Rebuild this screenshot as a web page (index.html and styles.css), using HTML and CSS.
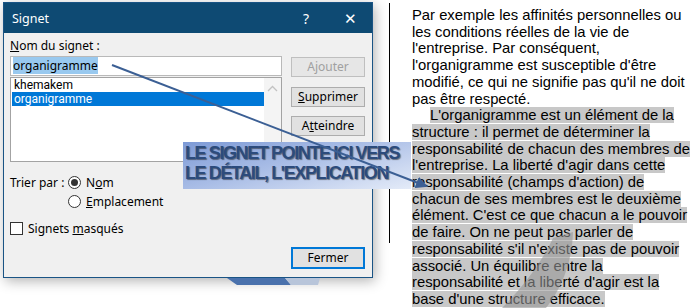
FILE: index.html
```html
<!DOCTYPE html>
<html lang="fr">
<head>
    <meta charset="UTF-8">
    <meta name="viewport" content="width=device-width, initial-scale=1.0">
    <title>Signet</title>
    <link rel="stylesheet" href="styles.css">
</head>
<body>
    <div class="page">
        <div class="dialog">
            <div class="titlebar">
                <span class="title">Signet</span>
                <span class="title-btn">?</span>
                <span class="title-btn close">&#x2715;</span>
            </div>
            <div class="dialog-body">
                <div class="left-col">
                    <div class="field-label"><u>N</u>om du signet :</div>
                    <div class="name-input"><span class="sel-text">organigramme</span></div>
                    <div class="listbox">
                        <div class="items">
                            <div class="item">khemakem</div>
                            <div class="item selected">organigramme</div>
                        </div>
                        <div class="scrollbar">
                            <svg width="11" height="7" viewBox="0 0 11 7"><path d="M1 6 L5.5 1.5 L10 6" fill="none" stroke="#c2c2c2" stroke-width="1.3"/></svg>
                        </div>
                    </div>
                    <div class="sort-row">
                        <span class="sort-label">Trier par :</span>
                        <span class="radio checked"></span>
                        <span>N<u>o</u>m</span>
                    </div>
                    <div class="sort-row second">
                        <span class="radio"></span>
                        <span><u>E</u>mplacement</span>
                    </div>
                    <div class="check-row">
                        <span class="checkbox"></span>
                        <span>Signets <u>m</u>asqués</span>
                    </div>
                </div>
                <div class="buttons">
                    <div class="btn disabled">Ajouter</div>
                    <div class="btn"><u>S</u>upprimer</div>
                    <div class="btn">A<u>t</u>teindre</div>
                    <div class="btn default">Fermer</div>
                </div>
            </div>
        </div>

        <div class="doc">
            <div class="doc-rule"></div>
            <p class="doc-text">
                Par exemple les affinités personnelles ou<br>
                les conditions réelles de la vie de<br>
                l'entreprise. Par conséquent,<br>
                l'organigramme est susceptible d'être<br>
                modifié, ce qui ne signifie pas qu'il ne doit<br>
                pas être respecté.<br>
                <span class="indent"></span><mark>L'organigramme est un élément de la<br>
                structure : il permet de déterminer la<br>
                responsabilité de chacun des membres de<br>
                l'entreprise. La liberté d'agir dans cette<br>
                responsabilité (champs d'action) de<br>
                chacun de ses membres est le deuxième<br>
                élément. C'est ce que chacun a le pouvoir<br>
                de faire. On ne peut pas parler de<br>
                responsabilité s'il n'existe pas de pouvoir<br>
                associé. Un équilibre entre la<br>
                responsabilité et la liberté d'agir est la<br>
                base d'une structure efficace.</mark>
            </p>
        </div>
    </div>

    <!-- annotation laid over the screenshot -->
    <div class="callout">LE SIGNET POINTE ICI VERS<br>LE DÉTAIL, L'EXPLICATION</div>

    <svg class="overlay" width="693" height="308" viewBox="0 0 693 308">
        <defs>
            <marker id="head" markerWidth="6" markerHeight="6" refX="5" refY="3" orient="auto" markerUnits="strokeWidth">
                <path d="M0 0 L6 3 L0 6 Z" fill="#3b5f94"/>
            </marker>
        </defs>
        <!-- curved arrow shape peeking out -->
        <path d="M227 278 L285 278 L291 285 L237 285 Z" fill="#4a72ad"/>
        <path d="M285 278 L320 278 L318 285 L291 285 Z" fill="#b8c5da"/>
        <path d="M553 238 L573 232 C572 262 562 288 546 308 L502 308 C522 288 542 262 553 238 Z" fill="rgba(150,150,150,0.6)"/>
        <!-- pointer line -->
        <line x1="112" y1="65" x2="426" y2="186" stroke="#3b5f94" stroke-width="2" marker-end="url(#head)"/>
    </svg>
</body>
</html>
```

FILE: styles.css
```css
* {
    box-sizing: border-box;
    padding: 0;
    margin: 0;
}
body {
    width: 693px;
    height: 308px;
    overflow: hidden;
    background: #fff;
    position: relative;
    font-family: 'Noto Sans', sans-serif;
}
.page {
    display: flex;
    align-items: flex-start;
}

/* dialog */
.dialog {
    width: 370px;
    height: 276px;
    margin: 2px 0 0 3px;
    border: 1px solid #1a5485;
    background: #f0f0f0;
    box-shadow: 2px 3px 12px rgba(0, 0, 0, 0.3);
    font-size: 12px;
    color: #000;
}
.titlebar {
    height: 30px;
    background: #0e4a73;
    color: #fff;
    display: flex;
    align-items: center;
}
.title {
    flex: 1;
    padding-left: 8px;
    font-size: 12.5px;
}
.title-btn {
    width: 44px;
    text-align: center;
    font-size: 14px;
}
.title-btn.close {
    font-size: 15px;
}
.dialog-body {
    height: 244px;
    display: grid;
    grid-template-columns: 272px 74px;
    column-gap: 9px;
    padding: 5px 7px 8px 6px;
}
.field-label {
    line-height: 16px;
    margin-bottom: 2px;
}
.name-input {
    height: 20px;
    background: #fff;
    border: 1px solid #b9b9b9;
    padding: 1px 0 0 2px;
    line-height: 15px;
}
.sel-text {
    background: #99c9ef;
}
.listbox {
    height: 85px;
    margin-top: 1px;
    background: #fff;
    border: 1px solid #a3a3a3;
    display: flex;
}
.items {
    flex: 1;
    padding-left: 1px;
    font-family: Roboto, sans-serif;
    font-size: 12px;
}
.item {
    height: 14px;
    line-height: 14px;
    padding-left: 2px;
}
.item.selected {
    background: #0078d7;
    color: #fff;
}
.scrollbar {
    width: 17px;
    background: #f4f4f4;
    display: flex;
    justify-content: center;
    padding-top: 7px;
}
.scrollbar svg {
    display: block;
}
.sort-row {
    height: 18px;
    display: flex;
    align-items: center;
    margin-top: 11px;
}
.sort-row.second {
    margin-top: 1px;
    padding-left: 58px;
}
.sort-label {
    width: 58px;
}
.radio {
    width: 13px;
    height: 13px;
    border: 1px solid #333;
    border-radius: 50%;
    background: #fff;
    margin-right: 5px;
    display: flex;
    align-items: center;
    justify-content: center;
}
.radio.checked::after {
    content: "";
    width: 7px;
    height: 7px;
    border-radius: 50%;
    background: #333;
}
.check-row {
    height: 16px;
    margin-top: 10px;
    display: flex;
    align-items: center;
}
.checkbox {
    width: 13px;
    height: 13px;
    border: 1px solid #333;
    background: #fff;
    margin-right: 5px;
}
.buttons {
    display: flex;
    flex-direction: column;
}
.btn {
    height: 20px;
    background: #e1e1e1;
    border: 1px solid #adadad;
    text-align: center;
    line-height: 17px;
    margin-top: 10px;
}
.btn.disabled {
    margin-top: 19px;
    color: #a0a0a0;
    border-color: #bfbfbf;
    background: #e6e6e6;
}
.btn:nth-child(3) {
    margin-top: 9px;
}
.btn.default {
    margin-top: auto;
    height: 22px;
    border: 2px solid #0078d7;
    line-height: 17px;
}

/* document page */
.doc {
    display: flex;
    margin-left: 16px;
}
.doc-rule {
    width: 1px;
    height: 240px;
    margin-top: 3px;
    background: #000;
}
.doc-text {
    margin: 7px 0 0 22px;
    font-family: 'Liberation Sans', Arial, sans-serif;
    font-size: 14.8px;
    line-height: 16.7px;
    color: #000;
    white-space: nowrap;
}
.indent {
    display: inline-block;
    width: 18px;
}
mark {
    background: #c8c8c8;
    color: #000;
}

/* annotation */
.callout {
    position: absolute;
    left: 183px;
    top: 142px;
    width: 228px;
    height: 47px;
    padding: 1px 0 0 2px;
    background: linear-gradient(165deg, #7d9ad6 0%, #a9bde6 45%, #e4ebf8 100%);
    font-family: 'Liberation Sans', Arial, sans-serif;
    font-weight: bold;
    font-size: 18px;
    line-height: 20px;
    letter-spacing: -1.4px;
    color: #2c4b7c;
    text-shadow: 1px 1px 1px rgba(0, 0, 0, 0.45);
    white-space: nowrap;
}
.overlay {
    position: absolute;
    left: 0;
    top: 0;
    pointer-events: none;
}
```
